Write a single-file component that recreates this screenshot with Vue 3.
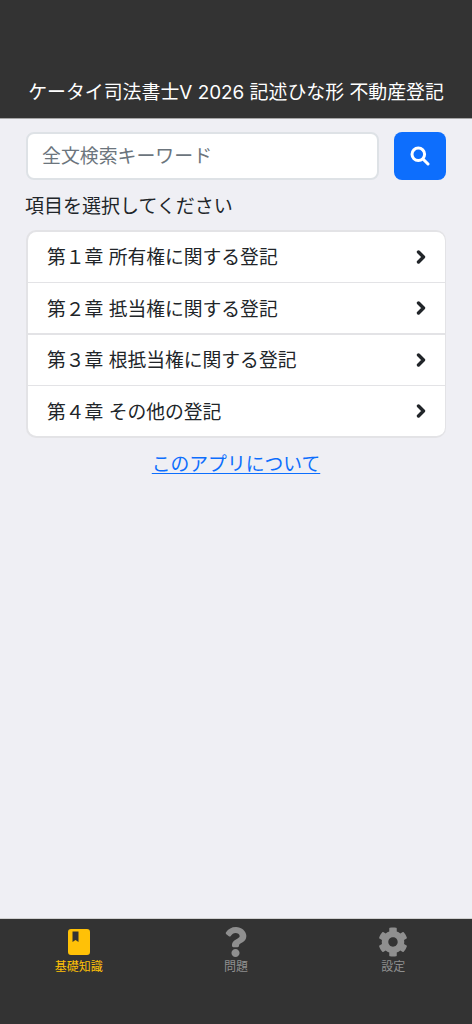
<script setup>
const chapters = [
  '第１章 所有権に関する登記',
  '第２章 抵当権に関する登記',
  '第３章 根抵当権に関する登記',
  '第４章 その他の登記',
]
</script>

<template>
  <div class="app">
    <header class="header">
      <h1 class="title">ケータイ司法書士V 2026 記述ひな形 不動産登記</h1>
    </header>
    <main class="main">
      <form class="search" @submit.prevent>
        <input class="input" type="text" placeholder="全文検索キーワード" />
        <button class="btn" type="submit" aria-label="検索">
          <svg width="20" height="20" viewBox="0 0 20 20" fill="none" stroke="#fff" stroke-width="3" stroke-linecap="round">
            <circle cx="8.3" cy="8.3" r="6.3" />
            <path d="M13 13l5 5" />
          </svg>
        </button>
      </form>
      <p class="label">項目を選択してください</p>
      <ul class="list">
        <li v-for="c in chapters" :key="c" class="row">
          <span class="row-text">{{ c }}</span>
          <svg class="chev" width="10" height="14" viewBox="0 0 10 14" fill="none" stroke="#212529" stroke-width="3.400" stroke-linecap="round" stroke-linejoin="round">
            <path d="M2.500 2l5 5-5 5" />
          </svg>
        </li>
      </ul>
      <a class="about" href="#" @click.prevent>このアプリについて</a>
    </main>
    <nav class="tabs">
      <div class="tab active">
        <svg class="icon" width="22" height="26" viewBox="0 0 22 26">
          <path fill="#ffc107" fill-rule="evenodd" d="M3 0h16a3 3 0 0 1 3 3v20a3 3 0 0 1-3 3H3a3 3 0 0 1-3-3V3a3 3 0 0 1 3-3zM4.500 2.500v10.500l3-2 3 2V2.500z" />
        </svg>
        <span>基礎知識</span>
      </div>
      <div class="tab">
        <svg class="icon" width="23" height="30" viewBox="0 0 384 512">
          <path fill="#8f8f8f" d="M202.021 0C122.202 0 70.503 32.703 29.914 91.026c-7.363 10.58-5.093 25.086 5.178 32.874l43.138 32.709c10.373 7.865 25.132 6.026 33.253-4.148 25.049-31.381 43.63-49.449 82.757-49.449 30.764 0 68.816 19.799 68.816 49.631 0 22.552-18.617 34.134-48.993 51.164-35.423 19.86-82.299 44.576-82.299 106.405V320c0 13.255 10.745 24 24 24h72.471c13.255 0 24-10.745 24-24v-5.773c0-42.86 125.268-44.645 125.268-160.627C377.504 66.256 286.902 0 202.021 0zM192 373.459c-38.196 0-69.271 31.075-69.271 69.271 0 38.195 31.075 69.27 69.271 69.27s69.271-31.075 69.271-69.271-31.075-69.27-69.271-69.27z" />
        </svg>
        <span>問題</span>
      </div>
      <div class="tab">
        <svg class="icon" width="30" height="30" viewBox="0 0 512 512">
          <path fill="#8f8f8f" d="M487.4 315.7l-42.6-24.6c4.3-23.2 4.3-47 0-70.2l42.6-24.6c4.9-2.8 7.1-8.6 5.5-14-11.1-35.6-30-67.8-54.7-94.6-3.8-4.1-10-5.1-14.8-2.3L380.8 110c-17.9-15.4-38.5-27.3-60.8-35.1V25.800c0-5.6-3.9-10.5-9.4-11.7-36.7-8.2-74.3-7.8-109.2 0-5.5 1.2-9.4 6.1-9.4 11.7V75c-22.2 7.9-42.8 19.8-60.8 35.1L88.7 85.500c-4.9-2.8-11-1.9-14.8 2.3-24.7 26.7-43.6 58.9-54.7 94.6-1.7 5.4.6 11.2 5.5 14L67.3 221c-4.3 23.2-4.3 47 0 70.2l-42.6 24.6c-4.9 2.8-7.1 8.6-5.5 14 11.1 35.6 30 67.8 54.7 94.6 3.8 4.1 10 5.1 14.8 2.3l42.6-24.6c17.9 15.4 38.5 27.3 60.8 35.1v49.2c0 5.6 3.9 10.5 9.4 11.7 36.7 8.2 74.3 7.8 109.2 0 5.5-1.2 9.4-6.1 9.4-11.7v-49.2c22.2-7.9 42.8-19.8 60.8-35.1l42.6 24.6c4.9 2.8 11 1.9 14.8-2.3 24.7-26.7 43.6-58.9 54.7-94.6 1.5-5.5-.7-11.3-5.6-14.1zM256 336c-44.1 0-80-35.9-80-80s35.9-80 80-80 80 35.9 80 80-35.9 80-80 80z" />
        </svg>
        <span>設定</span>
      </div>
    </nav>
  </div>
</template>

<style>
body { background: #efeff4; }
</style>

<style scoped>
.app {
  width: 472px;
  height: 1024px;
  display: flex;
  flex-direction: column;
  overflow: hidden;
  background: #efeff4;
  font-family: Inter, "Noto Sans CJK JP", sans-serif;
  color: #212529;
}
.header {
  height: 119px;
  box-sizing: border-box;
  background: #333;
  border-bottom: 1px solid #a6a6a6;
  display: flex;
  align-items: flex-end;
  justify-content: center;
  padding-bottom: 11px;
}
.title {
  margin: 0;
  font-size: 18.900px;
  font-weight: 400;
  line-height: 28px;
  color: #fff;
  white-space: nowrap;
}
.main {
  flex: 1;
  padding: 13px 26px 0;
  display: flex;
  flex-direction: column;
}
.search {
  display: flex;
  gap: 15px;
  height: 48px;
}
.input {
  flex: 1;
  min-width: 0;
  box-sizing: border-box;
  height: 48px;
  padding: 1px 14px 0;
  border: 2px solid #dee2e6;
  border-radius: 8px;
  background: #fff;
  font: inherit;
  font-size: 18.900px;
  color: #212529;
  outline: none;
}
.input::placeholder {
  color: #6c757d;
  opacity: 1;
}
.btn {
  width: 52px;
  height: 48px;
  flex: none;
  padding: 0;
  border: 0;
  border-radius: 8px;
  background: #0d6efd;
  display: flex;
  align-items: center;
  justify-content: center;
}
.label {
  margin: 13px 0 9px -1px;
  font-size: 19px;
  line-height: 28px;
}
.list {
  margin: 0;
  padding: 1.500px;
  list-style: none;
  background: #e3e3e6;
  border-radius: 10px;
  display: flex;
  flex-direction: column;
  gap: 1.500px;
  overflow: hidden;
}
.row {
  height: 50.100px;
  flex: none;
  display: flex;
  align-items: center;
  justify-content: space-between;
  padding: 0 19px 0 19.500px;
  font-size: 18.800px;
  background: #fff;
}
.row:first-child {
  border-radius: 8.500px 8.500px 0 0;
}
.row:last-child {
  border-radius: 0 0 8.500px 8.500px;
}
.row-text {
  display: block;
  margin-top: -2px;
}
.about {
  align-self: center;
  margin-top: 14px;
  font-size: 18.800px;
  line-height: 26px;
  color: #0d6efd;
  text-decoration: underline;
  text-underline-offset: 2px;
}
.tabs {
  height: 106px;
  box-sizing: border-box;
  flex: none;
  background: #333;
  border-top: 1px solid #d0d0d0;
  display: grid;
  grid-template-columns: repeat(3, 1fr);
  padding-top: 8px;
}
.tab {
  display: flex;
  flex-direction: column;
  align-items: center;
  height: 50px;
  font-size: 12px;
  line-height: 14px;
  color: #8f8f8f;
}
.tab .icon {
  height: 30px;
  margin-bottom: 3px;
}
.tab.active {
  color: #ffc107;
}
</style>
